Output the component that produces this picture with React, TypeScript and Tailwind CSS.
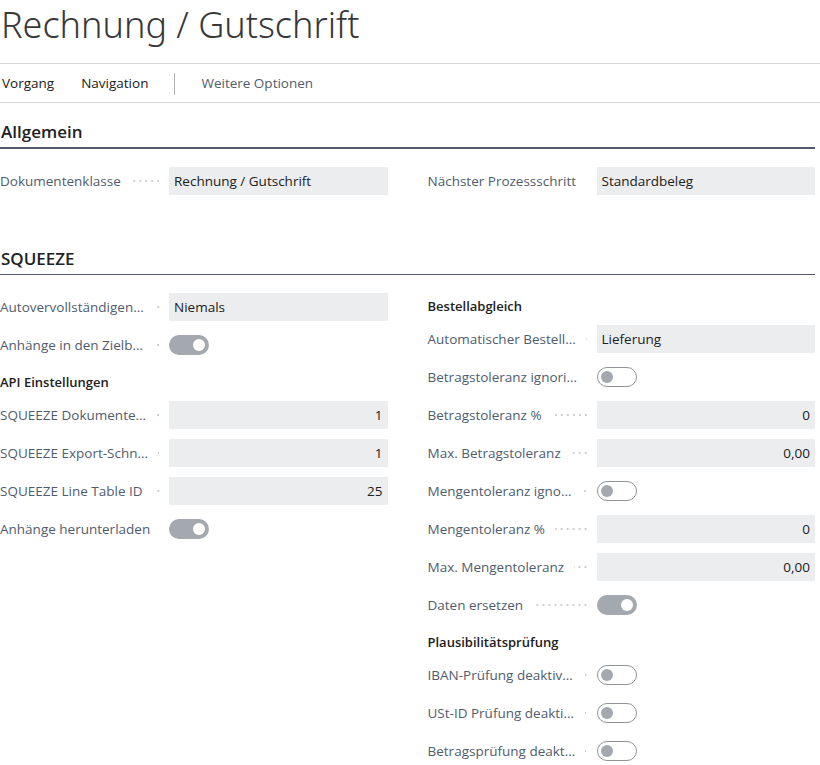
const font = { fontFamily: '"Segoe UI", "Open Sans", "Noto Sans", sans-serif' };
const titleFont = { fontFamily: '"Segoe UI Light", "Noto Sans", "Open Sans", sans-serif' };

type Row =
  | { kind: 'field'; label: string; value: string; align?: 'left' | 'right' }
  | { kind: 'toggle'; label: string; on: boolean }
  | { kind: 'group'; label: string };

const leftRows: Row[] = [
  { kind: 'field', label: 'Autovervollständigen…', value: 'Niemals' },
  { kind: 'toggle', label: 'Anhänge in den Zielb…', on: true },
  { kind: 'group', label: 'API Einstellungen' },
  { kind: 'field', label: 'SQUEEZE Dokumente…', value: '1', align: 'right' },
  { kind: 'field', label: 'SQUEEZE Export-Schn…', value: '1', align: 'right' },
  { kind: 'field', label: 'SQUEEZE Line Table ID', value: '25', align: 'right' },
  { kind: 'toggle', label: 'Anhänge herunterladen', on: true },
];

const rightRows: Row[] = [
  { kind: 'group', label: 'Bestellabgleich' },
  { kind: 'field', label: 'Automatischer Bestell…', value: 'Lieferung' },
  { kind: 'toggle', label: 'Betragstoleranz ignori…', on: false },
  { kind: 'field', label: 'Betragstoleranz %', value: '0', align: 'right' },
  { kind: 'field', label: 'Max. Betragstoleranz', value: '0,00', align: 'right' },
  { kind: 'toggle', label: 'Mengentoleranz igno…', on: false },
  { kind: 'field', label: 'Mengentoleranz %', value: '0', align: 'right' },
  { kind: 'field', label: 'Max. Mengentoleranz', value: '0,00', align: 'right' },
  { kind: 'toggle', label: 'Daten ersetzen', on: true },
  { kind: 'group', label: 'Plausibilitätsprüfung' },
  { kind: 'toggle', label: 'IBAN-Prüfung deaktiv…', on: false },
  { kind: 'toggle', label: 'USt-ID Prüfung deakti…', on: false },
  { kind: 'toggle', label: 'Betragsprüfung deakt…', on: false },
];

function Label({ text }: { text: string }) {
  return (
    <div className="flex items-center w-[169px] shrink-0 pr-[8px]">
      <span className="whitespace-nowrap text-[#505c6d]">{text}</span>
      <div className="flex-1 ml-[10px] h-[2px] bg-[radial-gradient(circle,#cfcfcf_0.8px,transparent_1px)] bg-[length:6px_2px] bg-repeat-x bg-right" />
    </div>
  );
}

function Toggle({ on }: { on: boolean }) {
  if (on) {
    return (
      <div className="w-[40px] h-[20px] rounded-full bg-[#a4a8af] flex items-center justify-end pr-[4px]">
        <div className="w-[12px] h-[12px] rounded-full bg-white" />
      </div>
    );
  }
  return (
    <div className="w-[40px] h-[20px] rounded-full bg-white border border-[#8f9399] flex items-center pl-[3px]">
      <div className="w-[12px] h-[12px] rounded-full bg-[#a4a8af]" />
    </div>
  );
}

function FormRow({ row }: { row: Row }) {
  if (row.kind === 'group') {
    return (
      <div className="h-[28px] mb-[4px] flex items-center font-semibold text-[#212121] text-[13px]">
        {row.label}
      </div>
    );
  }
  return (
    <div className="h-[28px] mb-[10px] flex items-center">
      <Label text={row.label} />
      {row.kind === 'field' ? (
        <div
          className={
            'flex-1 h-[28px] bg-[#ecedee] flex items-center px-[5px] pt-px text-[#212121] ' +
            (row.align === 'right' ? 'justify-end' : 'justify-start')
          }
        >
          {row.value}
        </div>
      ) : (
        <Toggle on={row.on} />
      )}
    </div>
  );
}

function Section({ title, thick, children }: { title: string; thick?: boolean; children: React.ReactNode }) {
  return (
    <div>
      <div
        className={
          'pb-[3px] ' + (thick ? 'border-b-2 border-[#505a6b]' : 'border-b border-[#505a6b]')
        }
      >
        <h2 className="text-[17px] leading-[24px] font-semibold text-[#212121] pl-[1px]">{title}</h2>
      </div>
      {children}
    </div>
  );
}

export default function App() {
  return (
    <div className="w-[820px] h-[765px] bg-white overflow-hidden text-[13.5px]" style={font}>
      <div className="pr-[5px] h-[63px]">
        <h1 className="text-[36px] leading-[50px] font-light text-[#383838] pl-[1px]" style={titleFont}>
          Rechnung / Gutschrift
        </h1>
      </div>
      <div className="border-t border-b border-[#d6d6d6] h-[40px] flex items-center pt-px text-[#212121]">
        <span className="pl-[2px]">Vorgang</span>
        <span className="ml-[27px]">Navigation</span>
        <div className="ml-[26px] w-px h-[22px] bg-[#b0b0b0]" />
        <span className="ml-[26px] text-[#505c6d]">Weitere Optionen</span>
      </div>

      <div className="pr-[5px] pt-[17px]">
        <Section title="Allgemein" thick>
          <div className="grid grid-cols-2 gap-x-[40px] mt-[18px]">
            <FormRow row={{ kind: 'field', label: 'Dokumentenklasse', value: 'Rechnung / Gutschrift' }} />
            <FormRow row={{ kind: 'field', label: 'Nächster Prozessschritt', value: 'Standardbeleg' }} />
          </div>
        </Section>

        <div className="mt-[42px]">
          <Section title="SQUEEZE">
            <div className="grid grid-cols-2 gap-x-[40px] mt-[18px]">
              <div>
                {leftRows.map((r, i) => (
                  <FormRow key={i} row={r} />
                ))}
              </div>
              <div>
                {rightRows.map((r, i) => (
                  <FormRow key={i} row={r} />
                ))}
              </div>
            </div>
          </Section>
        </div>
      </div>
    </div>
  );
}
